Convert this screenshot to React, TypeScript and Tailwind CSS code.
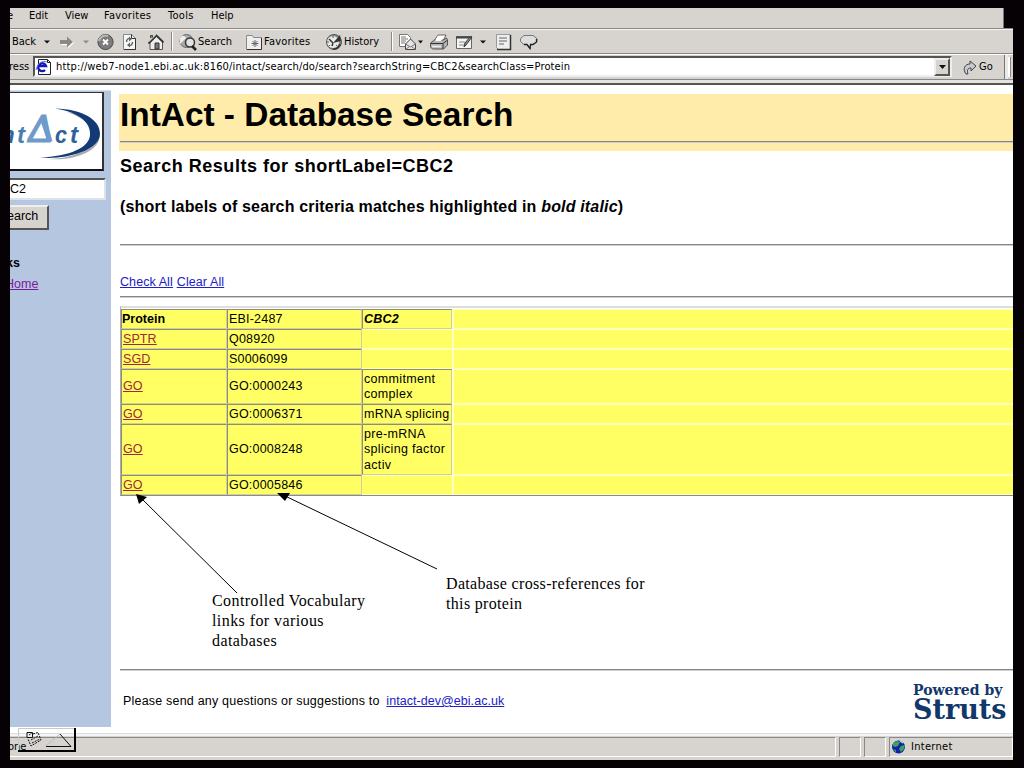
import React from "react";

const chromeFont = "font-['DejaVu_Sans_Condensed','DejaVu_Sans',sans-serif] [font-stretch:condensed]";

function Label({ w, children }: { w: string; children: React.ReactNode }) {
  return <span className={`${w} shrink-0 whitespace-nowrap`}>{children}</span>;
}

function Icon({ w, box, children }: { w: string; box: string; children: React.ReactNode }) {
  return (
    <svg className={`${w} h-[18px] shrink-0 overflow-visible`} viewBox={box} fill="none">
      {children}
    </svg>
  );
}

const Rule = ({ className }: { className: string }) => (
  <div className={`h-[2px] border-t border-t-[#858585] bg-[#cfcfcf] ${className}`} />
);

const Separator = () => <div className="h-[19px] w-[2px] shrink-0 border-l border-[#8b8986] bg-white" />;

function MenuBar() {
  return (
    <div className="flex h-[20px] w-[994px] items-center overflow-hidden border-r border-[#777] bg-[#d7d3cf] pb-[4px]">
      <Label w="w-[19px]"><span className="-ml-[3px]">e</span></Label>
      <Label w="w-[36px]">Edit</Label>
      <Label w="w-[39px]">View</Label>
      <Label w="w-[64px]"><span className="tracking-[0.3px]">Favorites</span></Label>
      <Label w="w-[43px]"><span className="tracking-[0.3px]">Tools</span></Label>
      <Label w="w-[40px]">Help</Label>
    </div>
  );
}

function ToolBar() {
  return (
    <div className="flex h-[25px] items-center border-t border-[#8a8886] bg-[#d7d3cf] pl-[2px] pt-px shadow-[inset_0_1px_0_#f4f4f4]">
      <Label w="w-[26px]">Back</Label>
      <Icon w="w-[18px]" box="0 0 18 18"><path d="M6 7.500h6l-3 3z" fill="#111" /></Icon>
      <Icon w="w-[22px]" box="0 0 22 18">
        <path d="M4 7h7V3.500L17 9l-6 5.500V11H4z" fill="#fff" transform="translate(1 1)" />
        <path d="M4 7h7V3.500L17 9l-6 5.500V11H4z" fill="#8b8986" />
      </Icon>
      <Icon w="w-[18px]" box="0 0 18 18"><path d="M5 7.500h6l-3 3z" fill="#8b8986" /></Icon>
      <Icon w="w-[18px]" box="0 0 18 18">
        <circle cx="9.500" cy="9" r="7.600" fill="#7c7c7c" stroke="#4c4c4c" />
        <path d="M3 8a6.500 6.500 0 0 1 9-5" stroke="#bbb" strokeWidth="2" />
        <path d="M7 6.500l5 5M12 6.500l-5 5" stroke="#fff" strokeWidth="1.800" />
      </Icon>
      <Icon w="w-[26px]" box="0 0 26 18">
        <path d="M9.500 1.500h8l4 4v11h-12z" fill="#f6f6f6" stroke="#888" />
        <path d="M17.500 1.500v4h4v11H10" stroke="#333" />
        <path d="M12.500 9c0-3 2-4 4-3M18.500 9c0 3-2 4-4 3" stroke="#666" strokeWidth="1.500" />
        <path d="M15 3.500v5l3-2.500zM16 14.500v-5L13 12z" fill="#666" />
      </Icon>
      <Icon w="w-[29px]" box="0 0 29 18">
        <path d="M10 9v7.500h12.500V8L16 3z" fill="#eee" stroke="#555" />
        <path d="M10.500 5V2.500h2V5" fill="#888" stroke="#444" />
        <path d="M8.500 10.500l8-8 7 7" stroke="#333" strokeWidth="1.800" />
        <path d="M8.500 9l7-7" stroke="#ccc" />
        <path d="M15 16v-6h4v6z" fill="#777" stroke="#333" />
      </Icon>
      <div className="w-[2px] shrink-0" />
      <Separator />
      <Icon w="w-[24px]" box="0 0 24 18">
        <circle cx="13.500" cy="8" r="6.500" fill="#aaa" stroke="#666" />
        <path d="M7 5c3-4 5-2 6 0l-3 3-3 3" fill="#eee" />
        <circle cx="17" cy="9.500" r="4.500" fill="#e3e3e3" stroke="#333" strokeWidth="1.500" />
        <path d="M19 13l4 4" stroke="#222" strokeWidth="2.500" />
      </Icon>
      <Label w="w-[48px]"><span className="ml-[1px]">Search</span></Label>
      <Icon w="w-[19px]" box="0 0 19 18">
        <path d="M1.500 4.500v-2h6l1 2h8v12h-15z" fill="#efefef" stroke="#888" />
        <path d="M16.500 5v11.500H2" stroke="#333" />
        <path d="M10 7v7M6.500 10.500h7M7.500 8l5 5M12.500 8l-5 5" stroke="#666" />
      </Icon>
      <Label w="w-[61px]"><span className="tracking-[0.2px]">Favorites</span></Label>
      <Icon w="w-[19px]" box="0 0 19 18">
        <circle cx="9" cy="9" r="7.500" fill="#8b8b8b" stroke="#555" />
        <circle cx="8" cy="9" r="6" fill="#e9e9e9" />
        <path d="M8 10l7-8 1 6z" fill="#333" />
        <path d="M8 10L4 6M8 10l-1 3M15 11a7 7 0 0 1-7 5" stroke="#333" strokeWidth="1.500" />
        <path d="M2 9h2M8 3v2M4 13l1-1M12 13l-1-1" stroke="#555" />
      </Icon>
      <Label w="w-[47px]">History</Label>
      <Separator />
      <Icon w="w-[25px]" box="0 0 25 18">
        <path d="M6.500 1.500h8l3 3v9h-11z" fill="#fff" stroke="#777" />
        <path d="M8 4h5M8 6h7M8 8h5M8 10h4" stroke="#777" />
        <path d="M12.500 11l5-5 5 5v5.500h-10z" fill="#e5e5e5" stroke="#444" />
        <path d="M12.500 11l5 3 5-3M12.500 16.500l4-3M22.500 16.500l-4-3" stroke="#777" />
      </Icon>
      <Icon w="w-[8px]" box="0 0 8 18"><path d="M0 7.500h5l-2.500 3z" fill="#111" /></Icon>
      <Icon w="w-[30px]" box="0 0 30 18">
        <path d="M8 8l4-6h8l-3 6z" fill="#fff" stroke="#666" />
        <path d="M4.500 10l4-3h9l3-2 1 2v5l-4 4h-11l-2-2z" fill="#b5b5b5" stroke="#555" />
        <path d="M9 8l1.500-2.500L12 3h6l-3 5z" fill="#fff" />
        <path d="M5 10.500h12l4-3M17 11v5" stroke="#333" />
        <path d="M6 13.500h9" stroke="#eee" strokeWidth="1.500" />
      </Icon>
      <Icon w="w-[20px]" box="0 0 20 18">
        <path d="M.5 3.500h15v12H.5z" fill="#f5f5f5" stroke="#666" />
        <path d="M0 4.500h16" stroke="#444" strokeWidth="2" />
        <path d="M3 9h6M3 12h5" stroke="#888" />
        <path d="M16 4l-6 8-2 2 1-4 5-6z" fill="#999" stroke="#333" />
      </Icon>
      <Icon w="w-[17px]" box="0 0 17 18"><path d="M4 7.500h6l-3 3z" fill="#111" /></Icon>
      <Icon w="w-[25px]" box="0 0 25 18">
        <path d="M3.500 1.500h14v15h-12l-2-2z" fill="#eee" stroke="#999" />
        <path d="M17.500 2v14.500H4" stroke="#333" strokeWidth="1.500" />
        <path d="M6 5h8M6 8h8M6 11h5" stroke="#666" strokeWidth="1.200" />
      </Icon>
      <Icon w="w-[22px]" box="0 0 22 18">
        <path d="M6 2.500h9l4 3v3l-4 3h-2l-1 4-3-4H6L2.500 8.500v-3z" fill="#dedede" stroke="#777" />
        <path d="M18.500 6v3L15 11.500h-2.500l-.5 4-3-4H6" stroke="#222" strokeWidth="1.300" />
      </Icon>
    </div>
  );
}

function AddressBar() {
  return (
    <div className="flex h-[26px] items-center border-t border-[#8a8886] bg-[#d7d3cf] shadow-[inset_0_1px_0_#fff]">
      <Label w="w-[23px]"><span className="-ml-[1px]">ress</span></Label>
      <div className="flex h-[21px] w-[919px] shrink-0 items-center border-2 border-r-[#eee] border-b-[#eee] border-l-[#555] border-t-[#555] bg-white">
        <Icon w="w-[21px]" box="0 0 21 18">
          <path d="M3.500 1.500h9l3 3v12h-12z" fill="#fff" stroke="#222" />
          <path d="M12.500 1.500v3h3" stroke="#222" />
          <path d="M10 12a4 4 0 1 1 1-4H4" stroke="#1616bd" strokeWidth="2.400" />
          <path d="M1 12C2 6 7 2 12 4" stroke="#557fd8" />
        </Icon>
        <span className="grow whitespace-nowrap pt-px tracking-[0.15px]">
          http://web7-node1.ebi.ac.uk:8160/intact/search/do/search?searchString=CBC2&amp;searchClass=Protein
        </span>
        <div className="flex h-[18px] w-[16px] items-center justify-center border-2 border-b-[#555] border-l-[#eee] border-r-[#555] border-t-[#eee] bg-[#d7d3cf]">
          <svg className="h-[4px] w-[7px]" viewBox="0 0 7 4"><path d="M0 0h7L3.500 4z" fill="#111" /></svg>
        </div>
      </div>
      <Icon w="w-[26px]" box="0 0 26 18">
        <path d="M14 16c-4-5-1-10 4-10V3l6 5-5 5v-3c-4 0-4 3-3 6z" fill="#c5cbd0" stroke="#444" />
      </Icon>
      <Label w="w-[26px]"><span className="ml-px">Go</span></Label>
      <div className="h-[24px] w-[4px] border-l border-[#777] bg-white/50" />
      <div className="h-[20px] w-[3px] border-r border-[#888] bg-white" />
    </div>
  );
}

function Sidebar() {
  return (
    <aside className="mt-[5px] flex h-[637px] w-[101px] shrink-0 flex-col overflow-hidden border-t border-[#d4dfee] bg-[#b5c7e0]">
      <div className="mt-px h-[79px] w-[94px] border-b-2 border-r-2 border-t border-b-[#111] border-r-[#333] border-t-[#333] bg-white">
        <svg className="h-[76px] w-[92px]" viewBox="10 93 92 76">
          <path d="M66 110C88 112 102 125 98 138C94 151 70 159 48 157C75 156 91 147 92 135C93 124 81 115 66 110Z" fill="#a9abb2" transform="translate(1 2)" />
          <path d="M55 108.500C85 109 103 122 99.500 137C96 151 65 160 40 157.500C70 156 89 148 90 135C91 122 78 112 55 108.500Z" fill="#123a75" />
          <g fontFamily="Liberation Sans, sans-serif" fontWeight="bold" fontStyle="italic">
            <text x="0" y="142.500" fontSize="24" fill="#33669c">n</text>
            <text x="17" y="142.500" fontSize="24" fill="#4c7cb0">t</text>
            <text x="28" y="141.500" fontSize="39" fontWeight="normal" fill="#6f9bcb" stroke="#6f9bcb" strokeWidth="1.200" textLength="25" lengthAdjust="spacingAndGlyphs">Δ</text>
            <path d="M45 115L52.500 141.500H47.500L40.500 121z" fill="#6f9bcb" />
            <text x="55" y="142.500" fontSize="24" textLength="12" lengthAdjust="spacingAndGlyphs" fill="#2f6299">c</text>
            <text x="70" y="142.500" fontSize="24" fill="#2f6299">t</text>
          </g>
        </svg>
      </div>
      <div className="mt-[7px] flex h-[22px] w-[96px] items-center border-2 border-b-[#dbe2ea] border-l-0 border-r-[#dbe2ea] border-t-[#555] bg-white text-[12.500px]">C2</div>
      <div className="mt-[5px] flex h-[25px] w-[39px] items-center border-2 border-b-[#555] border-l-0 border-r-[#555] border-t-[#eee] bg-[#d7d3cf] pb-[2px] text-[12.500px]"><span className="-ml-[3px]">earch</span></div>
      <div className="mt-[25px] text-[12.500px] font-bold leading-[16px]"><span className="-ml-[4px]">ks</span></div>
      <a className="mt-[5px] text-[12.500px] leading-[16px] text-[#7d1a9c] underline"><span className="-ml-[5px]">Home</span></a>
    </aside>
  );
}

const rows = [
  { h: "h-[20px]", name: "Protein", id: "EBI-2487", note: "CBC2", head: true },
  { h: "h-[20px]", name: "SPTR", id: "Q08920", note: "" },
  { h: "h-[20px]", name: "SGD", id: "S0006099", note: "" },
  { h: "h-[35px]", name: "GO", id: "GO:0000243", note: "commitment complex" },
  { h: "h-[20px]", name: "GO", id: "GO:0006371", note: "mRNA splicing" },
  { h: "h-[51px]", name: "GO", id: "GO:0008248", note: "pre-mRNA splicing factor activ" },
  { h: "h-[20px]", name: "GO", id: "GO:0005846", note: "" },
];

const cell = "flex items-center border border-b-[#cfcf9b] border-l-[#8d8d75] border-r-[#cfcf9b] border-t-[#8d8d75] pl-px pt-px";
const blank = "border-b border-t border-[#ffffc4]";

function Results() {
  return (
    <div className="mt-[8px] border-b border-l border-t-2 border-b-[#8b8b8b] border-l-[#aaa] border-t-[#dedede] pt-px text-[12.500px] leading-[15.500px]">
      {rows.map((r) => (
        <div key={r.id} className={`grid ${r.h} grid-cols-[106px_135px_90px_1fr] bg-[#ffff63]`}>
          <div className={`${cell} ${r.head ? "font-bold" : "text-[#a02838]"}`}>
            <span className={r.head ? "-ml-px" : "tracking-[0.1px] underline"}>{r.name}</span>
          </div>
          <div className={`${cell} tracking-[0.2px]`}>{r.id}</div>
          {r.note ? (
            <div className={`${cell} ${r.head ? "font-bold italic tracking-[0.2px]" : "tracking-[0.32px]"}`}><span className="-mr-2">{r.note}</span></div>
          ) : <div className={blank} />}
          <div className="border-b border-l-2 border-t border-[#ffffc4]" />
        </div>
      ))}
    </div>
  );
}

function Content() {
  return (
    <main className="relative flex grow flex-col pl-[9px]">
      <header className="-ml-px mt-[9px] h-[57px] bg-[#ffecaa] pl-px">
        <h1 className="h-[47px] whitespace-nowrap pt-[1px] text-[33.400px] font-bold leading-[39px]">IntAct - Database Search</h1>
        <Rule className="" />
      </header>
      <h2 className="mt-[5px] whitespace-nowrap text-[18px] font-bold leading-[20px] tracking-[0.53px]">Search Results for shortLabel=CBC2</h2>
      <h3 className="mt-[22px] whitespace-nowrap text-[16px] font-bold leading-[18px] tracking-[0.17px]">(short labels of search criteria matches highlighted in <i>bold italic</i>)</h3>
      <Rule className="mt-[28px]" />
      <div className="mt-[28px] flex h-[16px] gap-[4px] text-[12.500px] leading-[16px] tracking-[0.08px] text-[#2020c8] underline">
        <a>Check All</a><a>Clear All</a>
      </div>
      <Rule className="mt-[6px]" />
      <Results />
      <Rule className="mt-[173px]" />
      <footer className="flex h-[56px] items-start justify-between pl-[3px]">
        <p className="pt-[22px] text-[12.500px] leading-[16px] tracking-[0.2px]">Please send any questions or suggestions to <a className="ml-[3px] tracking-[0.05px] text-[#2020c8] underline">intact-dev@ebi.ac.uk</a></p>
        <div className="w-[100px] whitespace-nowrap pt-[11px] font-['DejaVu_Serif',serif] font-bold text-[#12376b]">
          <div className="text-[14px] leading-[16px]">Powered by</div>
          <div className="text-[27px] leading-[23px]">Struts</div>
        </div>
      </footer>
      <svg className="absolute left-0 top-[400px] h-[120px] w-[340px]" viewBox="111 485 340 120">
        <path d="M237 593L140 497M437 569L283 495" stroke="#000" />
        <path d="M136 494l11 3-8 7zM277 493l13 0-5 8z" fill="#000" />
      </svg>
      <p className="absolute left-[101px] top-[506px] whitespace-pre font-['Liberation_Serif',serif] text-[16px] leading-[20px] tracking-[0.42px]">{"Controlled Vocabulary\nlinks for various\ndatabases"}</p>
      <p className="absolute left-[335px] top-[489px] whitespace-pre font-['Liberation_Serif',serif] text-[16px] leading-[20px] tracking-[0.33px]">{"Database cross-references for\nthis protein"}</p>
    </main>
  );
}

const pane = "h-[20px] shrink-0 border border-b-white border-l-[#888] border-r-white border-t-[#888]";

function StatusBar() {
  return (
    <footer className={`flex h-[27px] items-center gap-[3px] border-t border-[#ddd] bg-[#d7d3cf] shadow-[inset_0_2px_0_#f5f5f5] ${chromeFont} text-[11px]`}>
      <div className={`${pane} flex w-[826px] items-center border-l-0`}><span className="-ml-[2px]">one</span></div>
      <div className={`${pane} w-[22px]`} />
      <div className={`${pane} w-[22px]`} />
      <div className={`${pane} flex grow items-center`}>
        <Icon w="w-[21px]" box="0 0 21 18">
          <circle cx="8.500" cy="9" r="6.500" fill="#1520a8" />
          <path d="M3 5l4-2 3 1-2 4-3 1-2-1zM11 8l4-1-1 4-3 3-2-3zM3 11l3 1v3z" fill="#37a55f" />
          <path d="M10 3l3 2" stroke="#a9e6ba" strokeWidth="1.500" />
        </Icon>
        <span className="tracking-[0.3px]">Internet</span>
      </div>
    </footer>
  );
}

export default function App() {
  return (
    <div className="h-[768px] w-[1024px] overflow-hidden bg-[#050105] pl-[10px] pr-[11px] pt-[8px] font-['Liberation_Sans',Arial,sans-serif] text-black">
      <div className="relative flex h-[752px] flex-col overflow-hidden">
        <div className={`${chromeFont} text-[11px] leading-[14px]`}>
          <MenuBar />
          <ToolBar />
          <AddressBar />
        </div>
        <div className="h-[6px] border-b-2 border-t border-b-[#555] border-t-[#888] bg-[#e4e2df]" />
        <div className="flex h-[648px] shrink-0 bg-white"><Sidebar /><Content /></div>
        <StatusBar />
        <svg className="absolute left-[8px] top-[719px] h-[25px] w-[60px]" viewBox="18 727 60 25">
          <path d="M18.500 751V728.500H75" fill="none" stroke="#c9c9c9" />
          <path d="M18 751H75V728" fill="none" stroke="#000" strokeWidth="2" />
          <path d="M27 732.500h5.500v5H27z" fill="#eee" stroke="#111" />
          <path d="M29 735l3-2M33 734l5-1.500 3 7.500-10 6-3-7M31 740l7-4M32 743l8-4" fill="none" stroke="#111" strokeDasharray="2 1" />
          <path d="M46 746.500H71L60 734" fill="none" stroke="#111" />
          <path d="M46 746L60 734" stroke="#bbb" />
        </svg>
      </div>
    </div>
  );
}
